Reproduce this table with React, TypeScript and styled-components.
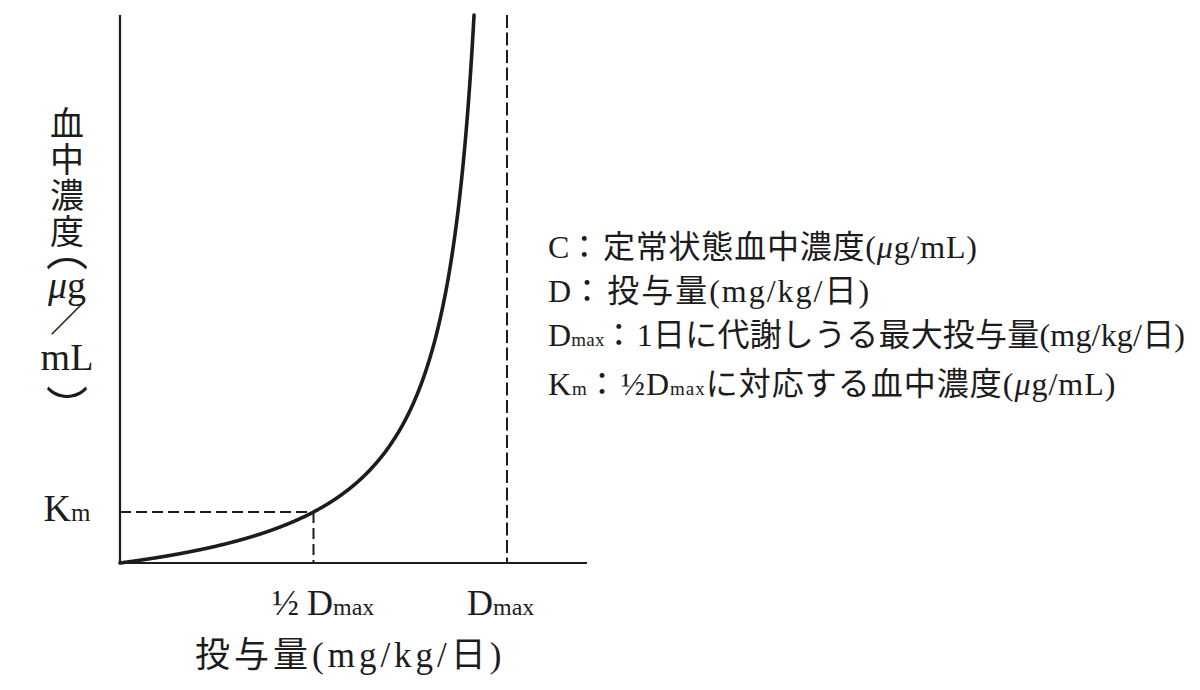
import React from "react";
import styled, { createGlobalStyle } from "styled-components";

const GlobalStyle = createGlobalStyle`
  html, body {
    margin: 0;
    background: #fff;
  }
  body {
    font-family: "Liberation Serif", "Noto Sans CJK JP", serif;
    color: #1c1c1c;
  }
`;

// plot geometry, in px relative to the y axis
const DMAX = 387;
const KM = 51;
const BASE_Y = 563;
const TOP_Y = 15;

const curvePoints = () => {
  const pts: string[] = [];
  const r = (BASE_Y - TOP_Y) / KM;
  const dEnd = (r * DMAX) / (r + 1);
  for (let d = 0; d <= dEnd; d += 0.5) {
    const y = BASE_Y - (KM * d) / (DMAX - d);
    pts.push(`${d.toFixed(2)},${y.toFixed(2)}`);
  }
  pts.push(`${dEnd.toFixed(2)},${TOP_Y}`);
  return pts.join(" ");
};

const Page = styled.div`
  display: grid;
  grid-template-columns: 120px 428px 1fr;
  grid-template-rows: 625px 65px;
  width: 1200px;
  height: 690px;
  overflow: hidden;
  background: #fff;
`;

const YAxisColumn = styled.div`
  display: flex;
  flex-direction: column;
  align-items: center;
  padding-left: 14px;
`;

const YTitle = styled.div`
  display: flex;
  flex-direction: column;
  align-items: center;
  margin-top: 104px;
`;

// one cell of the vertical axis title; $lh shifts the glyph inside its cell
const Kanji = styled.span<{ $h?: number; $size?: number; $lh?: number }>`
  display: block;
  font-family: "Noto Sans CJK JP", sans-serif;
  font-size: ${(p) => p.$size ?? 34}px;
  line-height: ${(p) => p.$lh ?? p.$h ?? 36}px;
  height: ${(p) => p.$h ?? 36}px;
`;

const Unit = styled.span<{ $h: number }>`
  display: block;
  font-size: 38px;
  line-height: ${(p) => p.$h}px;
  height: ${(p) => p.$h}px;
  white-space: nowrap;
`;

const Mu = styled.i`
  font-style: italic;
`;

const KmLabel = styled.div`
  margin-top: auto;
  margin-bottom: 94px;
  font-size: 38px;
  line-height: 36px;
  white-space: nowrap;
`;

const Small = styled.span<{ $size: number }>`
  font-size: ${(p) => p.$size}px;
`;

const Plot = styled.svg`
  display: block;
  overflow: visible;
  font-family: "Liberation Serif", serif;
  fill: #1c1c1c;
`;

const Legend = styled.div`
  display: flex;
  flex-direction: column;
  margin-top: 225px;
`;

const LegendRow = styled.div<{ $spacing: number }>`
  font-size: 32px;
  line-height: 44px;
  letter-spacing: ${(p) => p.$spacing}px;
  white-space: nowrap;
`;

const Colon = styled.span`
  margin-left: -2px;
  margin-right: 2px;
`;

const XTitle = styled.div`
  grid-column: 2 / 4;
  padding-left: 75px;
  padding-top: 6px;
  font-size: 35px;
  line-height: 50px;
  letter-spacing: 4px;
  white-space: nowrap;
`;

const ink = "#1c1c1c";

const App = () => {
  return (
    <>
      <GlobalStyle />
      <Page>
        <YAxisColumn>
          <YTitle>
            <Kanji>血</Kanji>
            <Kanji>中</Kanji>
            <Kanji>濃</Kanji>
            <Kanji>度</Kanji>
            <Kanji $h={24} $lh={0} $size={42}>
              ︵
            </Kanji>
            <Unit $h={26}>
              <Mu>μ</Mu>g
            </Unit>
            <Kanji $h={40}>／</Kanji>
            <Unit $h={38}>mL</Unit>
            <Kanji $h={16} $lh={56} $size={42}>
              ︶
            </Kanji>
          </YTitle>
          <KmLabel>
            K<Small $size={25}>m</Small>
          </KmLabel>
        </YAxisColumn>

        <Plot width={428} height={625} viewBox="0 0 428 625">
          <g stroke={ink} fill="none">
            <line x1={0} y1={TOP_Y} x2={0} y2={BASE_Y + 1} strokeWidth={2.2} />
            <line x1={-1} y1={BASE_Y} x2={467} y2={BASE_Y} strokeWidth={2.2} />
            <line
              x1={DMAX}
              y1={TOP_Y}
              x2={DMAX}
              y2={BASE_Y}
              strokeWidth={2}
              strokeDasharray="13 4.5"
            />
            <line
              x1={0}
              y1={BASE_Y - KM}
              x2={DMAX / 2}
              y2={BASE_Y - KM}
              strokeWidth={2}
              strokeDasharray="11 5"
            />
            <line
              x1={DMAX / 2}
              y1={BASE_Y - KM}
              x2={DMAX / 2}
              y2={BASE_Y}
              strokeWidth={2}
              strokeDasharray="11 5"
            />
            <polyline
              points={curvePoints()}
              strokeWidth={3.6}
              strokeLinejoin="round"
              strokeLinecap="round"
            />
          </g>
          <text x={152} y={615} fontSize={36}>
            ½
            <tspan dx={8}>D</tspan>
            <tspan fontSize={24}>max</tspan>
          </text>
          <text x={347} y={615} fontSize={36}>
            D<tspan fontSize={24}>max</tspan>
          </text>
        </Plot>

        <Legend>
          <LegendRow $spacing={0.8}>
            C<Colon>：</Colon>定常状態血中濃度(<Mu>μ</Mu>g/mL)
          </LegendRow>
          <LegendRow $spacing={2}>
            D<Colon>：</Colon>投与量(mg/kg/日)
          </LegendRow>
          <LegendRow $spacing={0.2}>
            D<Small $size={19}>max</Small>
            <Colon>：</Colon>1日に代謝しうる最大投与量(mg/kg/日)
          </LegendRow>
          <LegendRow $spacing={1}>
            K<Small $size={19}>m</Small>
            <Colon>：</Colon>½D<Small $size={19}>max</Small>に対応する血中濃度(
            <Mu>μ</Mu>g/mL)
          </LegendRow>
        </Legend>

        <XTitle>投与量(mg/kg/日)</XTitle>
      </Page>
    </>
  );
};

export default App;
